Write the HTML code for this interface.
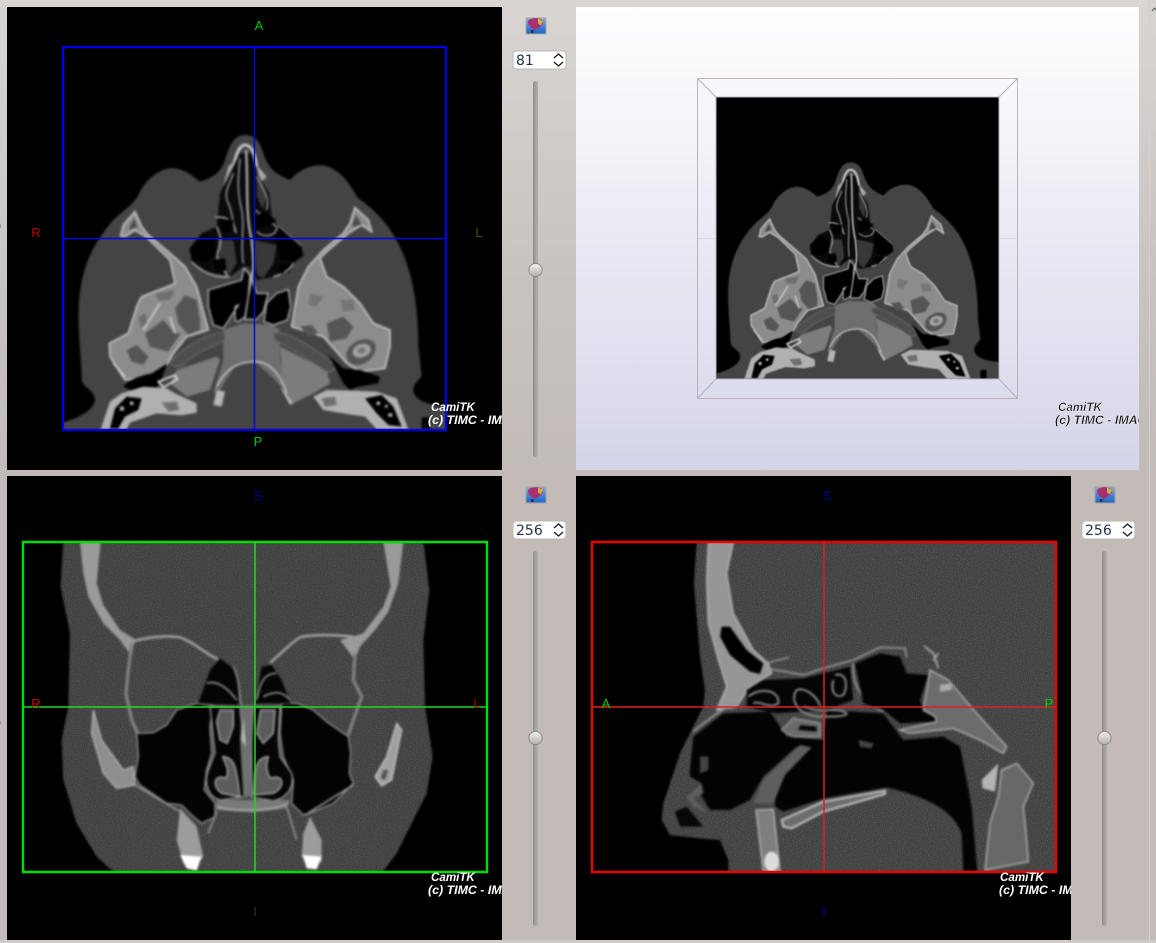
<!DOCTYPE html>
<html><head><meta charset="utf-8"><style>
html,body{margin:0;padding:0;width:1156px;height:943px;overflow:hidden;background:#c3bcb8}
svg{display:block}
text{font-family:"Liberation Sans",sans-serif}
.wm{font-style:italic;font-weight:bold;font-size:12.4px;fill:#fff}
.wk{font-style:italic;font-weight:bold;font-size:12.4px;fill:#111;stroke:#fff;stroke-width:.3px}
.c{font-size:11.6px}
.sp{font-family:"DejaVu Sans",sans-serif;font-size:14px;fill:#26324a}
.lb{font-size:13px;text-anchor:middle}
</style></head><body>
<svg xmlns="http://www.w3.org/2000/svg" xmlns:xlink="http://www.w3.org/1999/xlink" width="1156" height="943" viewBox="0 0 1156 943">
<defs>
<linearGradient id="win" x1="0" y1="0" x2="0" y2="1"><stop offset="0" stop-color="#d9d5d2"/><stop offset=".3" stop-color="#c9c3bf"/><stop offset=".5" stop-color="#c2bbb7"/><stop offset="1" stop-color="#c2bbb7"/></linearGradient>
<linearGradient id="bg3" x1="0" y1="0" x2="0" y2="1"><stop offset="0" stop-color="#ffffff"/><stop offset="1" stop-color="#d5d5ea"/></linearGradient>
<linearGradient id="gr" x1="0" y1="0" x2="1" y2="0"><stop offset="0" stop-color="#8f8985"/><stop offset=".5" stop-color="#a8a29e"/><stop offset="1" stop-color="#b3ada8"/></linearGradient>
<linearGradient id="hd" x1="0" y1="0" x2="0" y2="1"><stop offset="0" stop-color="#f2f0ee"/><stop offset="1" stop-color="#b5afaa"/></linearGradient>
<linearGradient id="ic" x1="0" y1="0" x2="0" y2="1"><stop offset="0" stop-color="#9aa2c8"/><stop offset=".45" stop-color="#4d86d8"/><stop offset="1" stop-color="#1c66c8"/></linearGradient>
<filter id="bl" x="-5%" y="-5%" width="110%" height="110%" color-interpolation-filters="sRGB"><feGaussianBlur stdDeviation="3.4"/></filter>
<filter id="nz" x="0" y="0" width="100%" height="100%" color-interpolation-filters="sRGB"><feTurbulence type="fractalNoise" baseFrequency=".28" numOctaves="2" seed="4"/><feColorMatrix values="0 0 0 0 .6  0 0 0 0 .6  0 0 0 0 .6  1.8 0 0 0 -.7"/></filter>
<clipPath id="cAx"><rect x="8" y="-100" width="1154" height="1000"/></clipPath>
<clipPath id="c3d"><rect x="716" y="97" width="283" height="282"/></clipPath>
<clipPath id="cCo"><rect x="6" y="6" width="1392" height="990"/></clipPath>
<clipPath id="hC"><path d="M130,6 L122,140 L150,280 L145,500 L125,600 L130,720 L170,850 L230,950 L285,1000 L1085,1000 L1130,940 L1170,860 L1220,760 L1238,650 L1215,500 L1210,300 L1228,150 L1210,6 Z"/></clipPath>
<clipPath id="hS"><path d="M320,6 L312,130 L330,350 L345,450 L340,500 L310,560 L270,640 L220,790 L215,840 L240,885 L330,895 L390,900 L415,960 L415,1000 L1400,1000 L1400,6 Z"/></clipPath>
<clipPath id="pA"><rect x="7" y="7" width="495" height="463"/></clipPath>
<clipPath id="p3"><rect x="576" y="7" width="563" height="463"/></clipPath>
<clipPath id="pC"><rect x="7" y="476" width="495" height="464"/></clipPath>
<clipPath id="pS"><rect x="576" y="476" width="495" height="464"/></clipPath>

<g id="axial">
<g filter="url(#bl)">
<path fill="#444444" d="M555,15 C590,15 600,40 612,75 C625,110 640,130 690,150 C720,115 770,95 810,112 C850,130 870,165 895,205 C960,250 1010,310 1040,400 C1065,470 1075,560 1075,650 L1085,735 C1080,750 1060,760 1060,780 C1062,810 1100,825 1162,830 L1162,900 L8,900 L8,878 C50,865 100,845 105,810 C105,780 70,775 65,750 C65,680 50,600 58,500 C70,400 100,340 160,270 C190,240 220,225 235,195 C260,140 310,110 345,115 C380,120 400,140 420,155 C450,145 480,135 495,90 C510,40 525,15 555,15 Z"/>
<path fill="#000" d="M1085,862h25v35h-25z"/>
<!-- nasal bridge -->
<path fill="none" stroke="#c4c4c4" stroke-width="9" d="M520,110 C530,65 540,45 555,45 C575,45 585,70 590,110"/>
<path fill="#a8a8a8" d="M505,110 L530,85 L520,150 L490,170 Z M590,105 L620,140 L600,160 Z"/>
<!-- central dark complex -->
<path fill="#0a0a0a" d="M540,70 L575,70 L592,130 L628,190 L635,260 L655,290 L725,350 L730,378 L700,400 L690,425 L650,440 L590,450 L565,410 L550,410 L510,440 L440,425 L395,395 L388,355 L425,310 L470,290 L480,190 L515,120 Z"/>
<path fill="none" stroke="#8c8c8c" stroke-width="5" d="M520,130 C505,170 490,190 505,220 C520,250 515,280 530,310 M540,85 C535,140 530,180 545,240 C555,290 540,340 550,400"/>
<path fill="none" stroke="#b0b0b0" stroke-width="7" d="M558,60 C565,150 555,250 575,330 C580,380 585,430 570,450"/>
<path fill="#383838" d="M590,120 L620,190 L610,240 L590,200 Z M582,330 L650,345 L640,400 L610,445 L590,435 Z M475,330 L520,330 L530,400 L505,440 L470,400 Z"/>
<path fill="none" stroke="#8a8a8a" stroke-width="5" d="M590,140 C610,180 630,200 620,240 M585,240 L650,290 M590,305 C620,330 655,310 650,290"/>
<path fill="none" stroke="#a0a0a0" stroke-width="5" d="M470,290 C490,330 480,350 470,375 M470,375 C470,400 500,420 500,440 M395,395 C430,430 470,445 510,440 M465,262 C500,258 525,275 525,305 M640,440 C665,435 690,420 700,400 M655,290 L725,350"/>
<path fill="#000" d="M470,265 L520,270 L520,300 L490,310 Z M590,260 L610,245 L650,270 L625,290 L590,300 Z M460,390 L495,385 L500,420 L470,428 Z M655,405 L695,400 L665,435 Z M390,355 L430,310 L465,330 L470,375 L440,395 L400,390 Z M655,290 L725,350 L730,378 L700,395 L660,390 L650,340 Z"/>
<!-- sphenoid black -->
<path fill="#000" stroke="#b0b0b0" stroke-width="4" d="M445,480 L545,450 L552,415 L570,435 L565,500 L555,560 L535,575 L525,570 L525,530 L535,525 L490,595 L460,585 L445,530 Z"/>
<path fill="#000" stroke="#b0b0b0" stroke-width="4" d="M575,445 L590,490 L625,490 L610,545 L590,568 L555,568 L565,500 Z"/>
<path fill="#000" stroke="#b0b0b0" stroke-width="4" d="M685,478 L692,530 L682,570 L640,585 L612,575 L620,520 L650,490 Z"/>
<!-- left bone mass -->
<path fill="#8c8c8c" stroke="#c4c4c4" stroke-width="5" d="M182,318 L190,285 L225,245 L245,290 L262,312 L330,370 L375,410 L410,470 L430,545 L445,600 L380,620 L340,670 L320,705 L280,740 L195,750 L150,680 L148,640 L205,610 L232,525 L245,500 L310,475 L345,460 L330,390 L260,322 L225,300 L195,320 Z"/>
<path fill="#4b4b4b" d="M205,300 L222,265 L232,290 Z"/>
<path fill="#555" d="M345,535 L375,495 L410,510 L420,570 L420,600 L385,615 L355,580 Z M255,610 L310,570 L345,610 L362,610 L325,665 L270,650 Z M200,660 L230,645 L265,680 L250,705 L215,695 Z"/>
<path fill="#6f6f6f" d="M285,490 L345,480 L330,510 L295,510Z M235,560 L255,550 L265,585 L240,590Z"/>
<path fill="none" stroke="#d0d0d0" stroke-width="5" d="M250,600 L300,520 M345,610 L330,560 M160,700 L195,740"/>
<!-- right bone mass -->
<path fill="#8c8c8c" stroke="#c4c4c4" stroke-width="5" d="M935,305 L925,270 L885,233 L870,280 L850,310 L790,360 L745,410 L715,470 L700,560 L695,590 L790,620 L830,665 L860,700 L900,725 L975,715 L990,650 L990,600 L940,580 L900,520 L850,470 L800,440 L780,385 L800,365 L865,310 L905,285 Z"/>
<path fill="#4b4b4b" d="M905,285 L888,255 L875,290 Z"/>
<path fill="#555" d="M800,580 L850,560 L880,590 L860,625 L810,635 Z M720,590 L755,585 L775,610 L745,620Z M860,665 C875,630 925,615 945,640 C955,670 925,705 890,705 C870,705 855,690 860,665 Z"/>
<ellipse cx="905" cy="662" rx="28" ry="20" fill="#a0a0a0" transform="rotate(-20 905 662)"/>
<ellipse cx="905" cy="662" rx="12" ry="9" fill="#767676"/>
<path fill="#757575" d="M750,490 L790,500 L770,530 L745,525Z M840,510 L880,510 L885,540 L850,545Z"/>
<!-- palate centre -->
<path fill="#6e6e6e" d="M490,600 L550,580 L640,585 L660,600 L660,690 L690,800 L640,745 L585,695 L530,700 L480,780 L460,790 L490,690 Z"/>
<path fill="#7c7c7c" d="M660,650 L800,720 L810,760 L760,790 L700,820 L670,770 Z M480,690 L470,680 L350,720 L330,760 L380,800 L450,780 Z"/>
<path fill="none" stroke="#c0c0c0" stroke-width="5" d="M470,770 C500,710 540,695 585,695 C630,695 660,730 680,790"/>
<path fill="#4e4e4e" stroke="#6c6c6c" stroke-width="3" d="M640,610 C680,600 760,650 825,705 C830,725 810,730 790,720 C740,680 680,650 645,630 Z M495,610 C470,600 390,635 335,690 C330,710 350,715 370,705 C400,670 460,650 495,630 Z"/>
<path fill="#b4b4b4" d="M470,780 L495,785 L485,830 L460,825 Z M680,790 L700,820 L690,825 L660,770 Z"/>
<!-- air -->
<path fill="#000" d="M190,770 C210,745 250,735 275,730 L322,700 L300,760 L270,790 L215,782 Z M805,675 L850,715 L900,720 L960,740 L955,760 L895,770 L870,780 L850,760 L830,720 Z"/>
<!-- mastoids -->
<path fill="#b0b0b0" d="M122,898 L150,815 L185,790 L250,770 L320,775 L345,790 L410,820 L410,848 L365,856 L290,850 L210,878 L200,898 Z M760,800 L800,780 L880,782 L950,785 L1010,805 L1045,898 L950,898 L915,860 L860,852 L790,840 Z"/>
<path fill="#000" d="M150,895 L165,835 L200,800 L245,805 L235,840 L195,860 L175,895 Z M915,805 L965,795 L1000,830 L1025,890 L985,885 L950,850 Z"/>
<path fill="#b7b7b7" d="M180,830h12v12h-12z M210,815h10v10h-10z M950,815h10v10h-10z M985,850h12v10h-12z M975,825h8v8h-8z"/>
<path fill="#6f6f6f" d="M305,818 L350,815 L358,840 L325,845 Z M785,805 L825,800 L830,825 L795,830 Z"/>
<path fill="none" stroke="#e2e2e2" stroke-width="5" d="M295,755 L345,735 L352,748 L310,772 Z"/>
</g>
</g>
</defs>

<rect width="1156" height="943" fill="url(#win)"/>
<rect x="1149" y="0" width="1" height="943" fill="#d5d0cd"/>
<rect x="0" y="940" width="1156" height="3" fill="#d0cbc8"/>
<path d="M1152,11l2.5,-3l2.5,3" fill="none" stroke="#555" stroke-width="1"/>
<rect x="0" y="224" width="1" height="4" fill="#999"/><rect x="0" y="721" width="1" height="4" fill="#999"/>

<!-- Axial panel -->
<rect x="7" y="7" width="495" height="463" fill="#000"/>
<g clip-path="url(#pA)">
<g transform="translate(60,130) scale(.33333)"><use xlink:href="#axial" href="#axial" clip-path="url(#cAx)"/></g>
<path d="M63,47H446V430H63Z" fill="none" stroke="#0000ee" stroke-width="2.2"/>
<path d="M63,238.5H446M254.5,47V430" fill="none" stroke="#0000e6" stroke-width="1.4"/>
<text x="259" y="30" class="lb" fill="#00c800">A</text>
<text x="36" y="237" class="lb" fill="#bb0000">R</text>
<text x="479" y="237" class="lb" fill="#505000">L</text>
<text x="258" y="446" class="lb" fill="#00c800">P</text>
<text x="431" y="411" class="wm c">CamiTK</text>
<text x="428" y="424" class="wm">(c) TIMC - IMAG</text>
</g>

<!-- 3D panel -->
<rect x="576" y="7" width="563" height="463" fill="url(#bg3)"/>
<path d="M698,238.5H1017" stroke="#dcd9e6" stroke-width="1"/>
<rect x="716" y="97" width="283" height="282" fill="#000"/>
<g clip-path="url(#c3d)"><g transform="translate(714.5,158.7) scale(.245)"><use xlink:href="#axial" href="#axial"/></g></g>
<path d="M716,97H999V379H716Z" fill="none" stroke="#b8b4c4" stroke-width="1"/>
<path d="M697.5,78.5H1017.5V398.5H697.5Z" fill="none" stroke="#c5b0ba" stroke-width="1"/>
<path d="M697.5,78.5L716,97M1017.5,78.5L999,97M697.5,398.5L716,379M1017.5,398.5L999,379" fill="none" stroke="#b4b0ba" stroke-width="1"/>
<g clip-path="url(#p3)">
<text x="1058" y="411" class="wk c">CamiTK</text>
<text x="1055" y="424" class="wk">(c) TIMC - IMAG</text>
</g>

<!-- Coronal panel -->
<rect x="7" y="476" width="495" height="464" fill="#000"/>
<g clip-path="url(#pC)">
<g transform="translate(20,540) scale(.33333)">
<g clip-path="url(#cCo)">
<g filter="url(#bl)">
<path fill="#404040" d="M130,6 L122,140 L150,280 L145,500 L125,600 L130,720 L170,850 L230,950 L285,1000 L1085,1000 L1130,940 L1170,860 L1220,760 L1238,650 L1215,500 L1210,300 L1228,150 L1210,6 Z"/>
</g>
<g clip-path="url(#hC)"><rect x="120" y="6" width="1120" height="990" filter="url(#nz)" opacity=".3"/></g>
<g filter="url(#bl)">
<!-- skull -->
<path fill="#9a9a9a" d="M180,6 L242,6 L230,130 L250,195 L300,270 L345,298 L335,350 L300,300 L250,250 L205,170 L190,100 Z"/>
<path fill="#9a9a9a" d="M1090,6 L1150,6 L1135,130 L1105,215 L1065,270 L1020,320 L1005,360 L960,300 L1030,280 L1090,200 L1112,140 Z"/>
<g fill="none" stroke="#9c9c9c">
<path stroke-width="8" d="M335,305 C380,292 440,285 480,292 C520,305 560,345 595,358"/>
<path stroke-width="8" d="M1000,290 C950,285 880,282 840,292 C810,310 780,345 750,368"/>
<path stroke-width="10" stroke="#808080" d="M335,310 L325,390 L318,460 L335,540 L352,578"/>
<path stroke-width="10" stroke="#808080" d="M1005,340 L1000,420 L1025,470 L1000,540 L985,585"/>
</g>
<!-- sinuses -->
<path fill="#030303" stroke="#909090" stroke-width="4" d="M350,580 L400,578 L440,555 L470,510 L530,490 L580,498 L570,560 L575,640 L560,690 L553,750 L585,790 L585,830 L545,850 L520,830 L485,795 L440,790 L360,735 L345,710 L355,650 Z"/>
<path fill="#030303" stroke="#909090" stroke-width="4" d="M785,490 L830,490 L880,510 L920,545 L985,590 L992,640 L988,700 L1000,730 L940,790 L880,815 L850,825 L815,790 L820,720 L790,650 L780,580 Z"/>
<!-- ethmoid -->
<path fill="#050505" d="M535,490 L570,390 L600,355 L640,385 L655,430 L655,495 Z M705,490 L725,380 L755,375 L785,420 L812,490 Z"/>
<path fill="none" stroke="#8d8d8d" stroke-width="5" d="M560,430 C590,420 620,440 650,480 M640,380 C660,420 655,460 665,495 M710,480 C720,430 730,400 770,400 M730,470 C760,455 785,450 810,480"/>
<!-- nasal cavity -->
<path fill="#050505" stroke="#9a9a9a" stroke-width="4" d="M570,500 L660,500 L670,620 L672,770 L600,780 C565,770 550,730 565,690 L585,640 Z"/>
<path fill="#050505" stroke="#9a9a9a" stroke-width="4" d="M700,500 L780,500 L775,600 L780,650 L815,700 C825,740 800,775 760,782 L695,772 L695,620 Z"/>
<path fill="#5c5c5c" stroke="#a8a8a8" stroke-width="4" d="M590,545 L600,510 L640,510 L640,560 L622,610 L600,600 Z M608,650 C650,650 650,700 660,770 L605,760 C575,740 580,700 618,715 C630,690 615,670 608,650 Z"/>
<path fill="#5c5c5c" stroke="#a8a8a8" stroke-width="4" d="M722,510 L765,510 L760,580 L730,610 L710,580 Z M745,650 C700,650 705,710 700,765 L760,760 C800,740 790,700 752,715 C735,690 740,670 745,650 Z"/>
<path fill="#707070" d="M665,495 L705,495 L695,620 L690,770 L670,770 L660,600 Z"/>
<path fill="#b8b8b8" d="M670,530 L678,620 L664,600Z"/>
<path fill="#7a7a7a" d="M590,780 L810,780 L800,805 L700,818 L590,810 Z"/>
<path fill="none" stroke="#a8a8a8" stroke-width="5" d="M590,800 C640,815 760,815 805,790"/>
<path fill="none" stroke="#929292" stroke-width="5" d="M590,815 L565,880 M800,800 L830,900 M345,735 L480,815 M855,825 L1000,735"/>
<!-- zygoma -->
<path fill="#8e8e8e" stroke="#b4b4b4" stroke-width="4" d="M220,510 L245,600 L310,690 L340,680 L345,735 L290,745 L250,700 L215,580 Z"/>
<path fill="#a0a0a0" stroke="#c4c4c4" stroke-width="4" d="M1130,550 L1145,570 L1115,720 L1085,738 L1065,710 L1100,650 Z"/>
<path fill="#555" d="M1090,690 L1105,690 L1095,720 L1082,715Z"/>
<!-- alveolar -->
<path fill="#9c9c9c" d="M480,805 L530,860 L550,950 L520,990 L490,970 L470,900 Z M870,830 L905,900 L905,965 L870,985 L845,950 L850,880 Z"/>
<path fill="#fff" d="M480,945 L545,950 L530,992 L500,985 Z M848,945 L905,950 L890,988 L860,985 Z"/>
</g>
</g>
</g>
<path d="M23,542H487V872H23Z" fill="none" stroke="#00dd00" stroke-width="2.4"/>
<path d="M23,707H487M255,542V872" fill="none" stroke="#20d820" stroke-width="1.5"/>
<text x="258" y="500" class="lb" fill="#000090">S</text>
<text x="36" y="708" class="lb" fill="#cc0000">R</text>
<text x="477" y="708" class="lb" fill="#aa0000">L</text>
<text x="255" y="916" class="lb" fill="#303030">I</text>
<text x="431" y="881" class="wm c">CamiTK</text>
<text x="428" y="894" class="wm">(c) TIMC - IMAG</text>
</g>

<!-- Sagittal panel -->
<rect x="576" y="476" width="495" height="464" fill="#000"/>
<g clip-path="url(#pS)">
<g transform="translate(590,540) scale(.33333)">
<g clip-path="url(#cCo)">
<g filter="url(#bl)">
<path fill="#404040" d="M320,6 L312,130 L330,350 L345,450 L340,500 L310,560 L270,640 L220,790 L215,840 L240,885 L330,895 L390,900 L415,960 L415,1000 L1400,1000 L1400,6 Z"/>
</g>
<g clip-path="url(#hS)"><rect x="210" y="6" width="1190" height="990" filter="url(#nz)" opacity=".35"/></g>
<g filter="url(#bl)">
<!-- frontal bone -->
<path fill="#969696" stroke="#b8b8b8" stroke-width="4" d="M355,6 L430,6 L410,100 L430,220 L490,330 L535,370 L545,400 L480,440 L440,500 L380,510 L410,440 L385,360 L355,250 L350,120 Z"/>
<path fill="#000" d="M395,260 L420,260 L470,330 L520,370 L510,402 L480,395 L420,345 L390,290 Z"/>
<path fill="none" stroke="#8e8e8e" stroke-width="5" d="M535,368 L598,352"/>
<path fill="none" stroke="#8e8e8e" stroke-width="6" d="M310,575 C350,540 400,505 435,490"/>
<!-- airway -->
<path fill="#030303" d="M300,690 L310,590 L400,520 L540,515 L590,590 L700,600 L710,510 L880,520 L940,600 L1060,590 L1110,620 L1130,720 L1145,800 L1162,996 L1120,996 L1115,880 C1090,810 1010,770 890,742 L700,775 L580,815 L555,800 L560,720 L585,700 L660,625 L620,620 L520,710 L480,780 L420,810 L360,810 L330,760 L335,730 L300,710 Z"/>
<path fill="#444" d="M330,650 L355,650 L355,690 L330,700 Z M805,600 L850,610 L845,625 L810,620 Z"/>
<path fill="#5e5e5e" d="M630,615 L665,622 L585,705 L550,790 L490,790 L520,720 Z"/>
<!-- ethmoid -->
<path fill="#050505" d="M470,450 L520,420 L640,415 L700,400 L780,380 L790,480 L710,510 L560,520 L470,500 Z"/>
<path fill="none" stroke="#8a8a8a" stroke-width="6" d="M475,470 C510,440 570,450 565,490 C540,510 510,480 490,490 M620,450 C600,480 620,520 680,530 C730,530 770,530 770,520 C740,500 700,520 640,500 M620,450 C650,440 690,480 690,500 M735,405 C770,395 775,440 760,465 C740,475 720,460 730,420"/>
<path fill="#6a6a6a" stroke="#8e8e8e" stroke-width="5" d="M575,570 L610,535 L690,550 L690,590 L610,590 Z"/>
<path fill="#060606" d="M630,555 L680,560 L680,575 L625,570Z"/>
<path fill="none" stroke="#989898" stroke-width="5" d="M530,385 L640,405 L700,385 L790,360 L870,322 L945,325 L950,352 M790,370 C785,430 810,480 880,515"/>
<!-- sphenoid -->
<path fill="#030303" d="M795,370 L870,340 L930,350 L950,400 L1015,405 L990,480 L1000,515 L1035,530 L1040,545 L930,550 L880,510 L820,490 Z"/>
<path fill="#6c6c6c" stroke="#b4b4b4" stroke-width="4" d="M1020,390 L1075,420 L1160,520 L1250,620 L1240,640 L1170,600 L1090,565 L960,580 L930,570 L1040,545 L1035,530 L1000,510 L1012,440 Z"/>
<path fill="#acacac" d="M1050,435 L1085,430 L1085,450 L1050,455 Z"/>
<path fill="none" stroke="#a0a0a0" stroke-width="6" d="M1002,318 L1030,340 L1045,385 M1045,340 L1030,362"/>
<!-- spine -->
<path fill="#686868" stroke="#b4b4b4" stroke-width="4" d="M1235,690 L1280,670 L1330,730 L1300,800 L1310,900 L1315,965 L1185,990 L1200,850 L1225,770 Z"/>
<path fill="#b4b4b4" d="M1175,720 L1225,670 L1215,755 L1178,745 Z"/>
<!-- palate -->
<path fill="#6c6c6c" stroke="#c4c4c4" stroke-width="6" d="M575,840 L700,785 L885,752 L885,762 L700,815 L605,865 L580,860 Z"/>
<!-- incisor -->
<path fill="#7e7e7e" stroke="#b8b8b8" stroke-width="4" d="M498,810 L550,808 L570,996 L520,996 Z"/>
<ellipse cx="545" cy="965" rx="22" ry="30" fill="#dcdcdc"/>
<!-- nostril -->
<path fill="#080808" d="M255,815 L290,800 L340,860 L270,860 Z"/>
<path fill="#5e5e5e" d="M290,770 L335,730 L340,760 L310,775 L355,820 L310,800 Z"/>
</g>
</g>
</g>
<path d="M592,542H1056V872H592Z" fill="none" stroke="#ee0000" stroke-width="2.4"/>
<path d="M592,707H1056M824,542V872" fill="none" stroke="#e02020" stroke-width="1.5"/>
<text x="827" y="500" class="lb" fill="#000090">S</text>
<text x="606" y="708" class="lb" fill="#00d000">A</text>
<text x="1049" y="708" class="lb" fill="#00d000">P</text>
<text x="824" y="916" class="lb" fill="#0000c0">I</text>
<text x="1000" y="881" class="wm c">CamiTK</text>
<text x="999" y="894" class="wm">(c) TIMC - IMAG</text>
</g>

<!-- Controls -->
<g id="ctl1">
<rect x="526" y="18" width="20" height="16" fill="url(#ic)" stroke="#aaa59f" stroke-width="1"/>
<path d="M528,22 C528,17 543,17 543,22 C543,26 538,28 535,30 C532,28 528,26 528,22Z" fill="#a8306e"/>
<path d="M538,18.5l5,2.5l-2,4.5l-3,-2z" fill="#c8b840"/><rect x="531" y="30" width="2.5" height="3" fill="#333"/>
<rect x="513" y="51" width="53" height="18" rx="3.5" fill="#fff" stroke="#bdb8b3"/>
<text x="516" y="65" class="sp">81</text>
<path d="M554,58l4.5,-4l4.5,4M554,62l4.5,4l4.5,-4" fill="none" stroke="#222" stroke-width="1.4"/>
<rect x="533" y="81" width="5" height="376" rx="2.5" fill="url(#gr)"/>
<circle cx="535.5" cy="270" r="6.6" fill="url(#hd)" stroke="#908a85"/>
</g>
<g>
<rect x="526" y="487" width="20" height="16" fill="url(#ic)" stroke="#aaa59f" stroke-width="1"/>
<path d="M528,491 C528,486 543,486 543,491 C543,495 538,497 535,499 C532,497 528,495 528,491Z" fill="#a8306e"/>
<path d="M538,487.5l5,2.5l-2,4.5l-3,-2z" fill="#c8b840"/><rect x="531" y="499" width="2.5" height="3" fill="#333"/>
<rect x="513" y="521" width="53" height="18" rx="3.5" fill="#fff" stroke="#bdb8b3"/>
<text x="516" y="535" class="sp">256</text>
<path d="M554,528l4.5,-4l4.5,4M554,532l4.5,4l4.5,-4" fill="none" stroke="#222" stroke-width="1.4"/>
<rect x="533" y="551" width="5" height="375" rx="2.5" fill="url(#gr)"/>
<circle cx="535.5" cy="738" r="6.6" fill="url(#hd)" stroke="#908a85"/>
</g>
<g>
<rect x="1095" y="487" width="20" height="16" fill="url(#ic)" stroke="#aaa59f" stroke-width="1"/>
<path d="M1097,491 C1097,486 1112,486 1112,491 C1112,495 1107,497 1104,499 C1101,497 1097,495 1097,491Z" fill="#a8306e"/>
<path d="M1107,487.5l5,2.5l-2,4.5l-3,-2z" fill="#c8b840"/><rect x="1100" y="499" width="2.5" height="3" fill="#333"/>
<rect x="1082" y="521" width="53" height="18" rx="3.5" fill="#fff" stroke="#bdb8b3"/>
<text x="1085" y="535" class="sp">256</text>
<path d="M1123,528l4.5,-4l4.5,4M1123,532l4.5,4l4.5,-4" fill="none" stroke="#222" stroke-width="1.4"/>
<rect x="1102" y="551" width="5" height="375" rx="2.5" fill="url(#gr)"/>
<circle cx="1104.5" cy="738" r="6.6" fill="url(#hd)" stroke="#908a85"/>
</g>
</svg>
</body></html>
